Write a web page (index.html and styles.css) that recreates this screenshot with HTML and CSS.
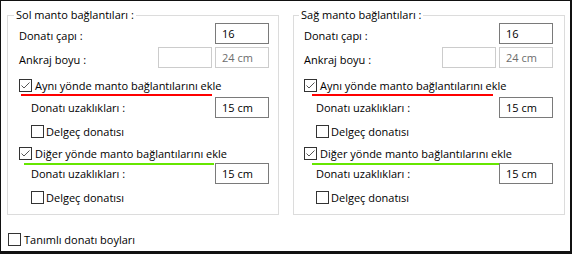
FILE: index.html
```html
<!DOCTYPE html>
<html lang="tr">
<head>
<meta charset="utf-8">
<title>Manto bağlantıları</title>
<link rel="stylesheet" href="styles.css">
</head>
<body>
<div class="window">
  <div class="panels">
    <fieldset class="group group--left">
      <legend class="group-title">Sol manto bağlantıları :</legend>
      <div class="group-body">
        <div class="row-field">
          <span class="field-label field-label--top">Donatı çapı :</span>
          <span class="textbox">16</span>
        </div>
        <div class="row-field row-field--b">
          <span class="field-label field-label--top">Ankraj boyu :</span>
          <span class="textbox textbox--disabled"></span>
          <span class="textbox textbox--disabled">24 cm</span>
        </div>
        <div class="row-check row-check--c">
          <span class="checkbox"><svg width="11" height="11" viewBox="0 0 11 11"><path d="M1.5 5.5 L4 8 L9.5 2.5" fill="none" stroke="#555" stroke-width="1"/></svg></span>
          <span class="check-label">Aynı yönde manto bağlantılarını ekle</span>
        </div>
        <div class="mark mark--red mark--l1"></div>
        <div class="row-field row-field--d indent">
          <span class="field-label">Donatı uzaklıkları :</span>
          <span class="textbox">15 cm</span>
        </div>
        <div class="row-check row-check--e indent">
          <span class="checkbox"></span>
          <span class="check-label check-label--tight">Delgeç donatısı</span>
        </div>
        <div class="row-check row-check--f">
          <span class="checkbox"><svg width="11" height="11" viewBox="0 0 11 11"><path d="M1.5 5.5 L4 8 L9.5 2.5" fill="none" stroke="#555" stroke-width="1"/></svg></span>
          <span class="check-label">Diğer yönde manto bağlantılarını ekle</span>
        </div>
        <div class="mark mark--green mark--l2"></div>
        <div class="row-field row-field--g indent">
          <span class="field-label">Donatı uzaklıkları :</span>
          <span class="textbox">15 cm</span>
        </div>
        <div class="row-check row-check--h indent">
          <span class="checkbox"></span>
          <span class="check-label check-label--tight">Delgeç donatısı</span>
        </div>
      </div>
    </fieldset>

    <fieldset class="group group--right">
      <legend class="group-title">Sağ manto bağlantıları :</legend>
      <div class="group-body">
        <div class="row-field">
          <span class="field-label field-label--top">Donatı çapı :</span>
          <span class="textbox">16</span>
        </div>
        <div class="row-field row-field--b">
          <span class="field-label field-label--top">Ankraj boyu :</span>
          <span class="textbox textbox--disabled"></span>
          <span class="textbox textbox--disabled">24 cm</span>
        </div>
        <div class="row-check row-check--c">
          <span class="checkbox"><svg width="11" height="11" viewBox="0 0 11 11"><path d="M1.5 5.5 L4 8 L9.5 2.5" fill="none" stroke="#555" stroke-width="1"/></svg></span>
          <span class="check-label">Aynı yönde manto bağlantılarını ekle</span>
        </div>
        <div class="mark mark--red mark--r1"></div>
        <div class="row-field row-field--d indent">
          <span class="field-label">Donatı uzaklıkları :</span>
          <span class="textbox">15 cm</span>
        </div>
        <div class="row-check row-check--e indent">
          <span class="checkbox"></span>
          <span class="check-label check-label--tight">Delgeç donatısı</span>
        </div>
        <div class="row-check row-check--f">
          <span class="checkbox"><svg width="11" height="11" viewBox="0 0 11 11"><path d="M1.5 5.5 L4 8 L9.5 2.5" fill="none" stroke="#555" stroke-width="1"/></svg></span>
          <span class="check-label">Diğer yönde manto bağlantılarını ekle</span>
        </div>
        <div class="mark mark--green mark--r2"></div>
        <div class="row-field row-field--g indent">
          <span class="field-label">Donatı uzaklıkları :</span>
          <span class="textbox">15 cm</span>
        </div>
        <div class="row-check row-check--h indent">
          <span class="checkbox"></span>
          <span class="check-label check-label--tight">Delgeç donatısı</span>
        </div>
      </div>
    </fieldset>
  </div>

  <div class="row-check bottom-option">
    <span class="checkbox"></span>
    <span class="check-label">Tanımlı donatı boyları</span>
  </div>
</div>
</body>
</html>
```

FILE: styles.css
```css
* {
  box-sizing: border-box;
}

html, body {
  margin: 0;
  padding: 0;
  background: #fff;
}

body {
  font-family: "Open Sans", "Noto Sans", "DejaVu Sans", sans-serif;
  font-size: 11px;
  color: #000;
}

.window {
  width: 572px;
  height: 254px;
  background: #fff;
  border-style: solid;
  border-color: #111;
  border-width: 1px 2px 3px 1px;
  padding: 6px 5px 0 6px;
}

.panels {
  display: flex;
  gap: 14px;
}

.group {
  width: 272px;
  margin: 0;
  padding: 0;
  border: 1px solid #dcdcdc;
  min-width: 0;
}

.group-title {
  margin-left: 6px;
  padding: 0 2px;
  line-height: 16px;
  height: 16px;
}

.group--right .group-title {
  margin-left: 5px;
}

.group-body {
  display: flex;
  flex-direction: column;
  padding: 0 9px 9px 11px;
}

.group--right .group-body {
  padding: 0 11px 9px 10px;
}

.row-field {
  display: flex;
  align-items: center;
  height: 21px;
  gap: 3px;
}

.field-label {
  flex: 1;
  white-space: nowrap;
}

.field-label--top {
  padding-top: 3px;
}

.textbox {
  width: 54px;
  height: 21px;
  border: 1px solid #7a7a7a;
  padding: 0 0 0 6px;
  line-height: 19px;
  background: #fff;
  white-space: nowrap;
}

.textbox--disabled {
  border-color: #cccccc;
  color: #6d6d6d;
}

.row-check {
  display: flex;
  align-items: center;
  height: 15px;
}

.checkbox {
  width: 13px;
  height: 13px;
  flex: none;
  border: 1px solid #333;
  background: #fff;
  display: flex;
}

.checkbox svg {
  display: block;
}

.check-label {
  margin-left: 3px;
  white-space: nowrap;
}

.check-label--tight {
  margin-left: 2px;
}

.indent {
  margin-left: 12px;
}

.row-field--b {
  margin-top: 3px;
}

.row-check--c {
  margin-top: 10px;
}

.row-field--d {
  margin-top: 1px;
}

.row-check--e {
  margin-top: 6px;
}

.row-check--f {
  margin-top: 7px;
}

.row-field--g {
  margin-top: -2px;
}

.row-check--h {
  margin-top: 6px;
}

.mark {
  height: 2px;
  flex: none;
}

.mark--red {
  background: #ff0000;
  margin-top: 1px;
}

.mark--green {
  background: #66e600;
  margin-top: 2px;
}

.mark--l1 {
  margin-left: 2px;
  width: 191px;
}

.mark--l2 {
  margin-left: 5px;
  width: 190px;
}

.mark--r1 {
  margin-left: 8px;
  width: 181px;
}

.mark--r2 {
  margin-left: 8px;
  width: 187px;
}

.bottom-option {
  margin-top: 17px;
  margin-left: 1px;
}
```
